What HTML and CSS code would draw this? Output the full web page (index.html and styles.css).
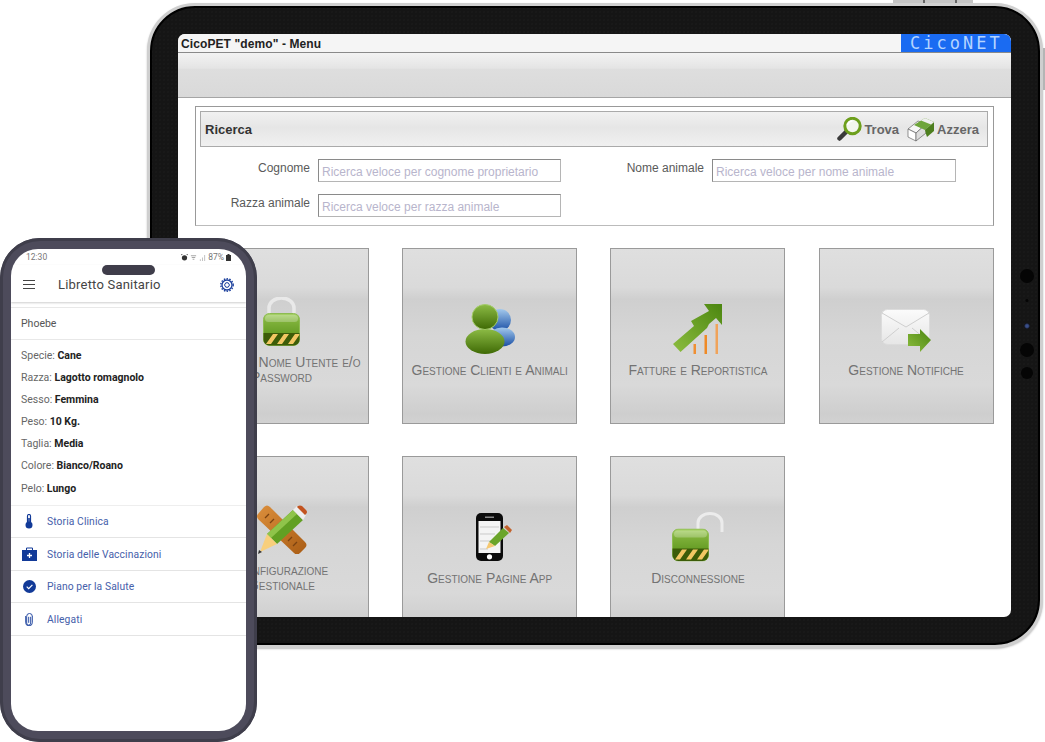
FILE: index.html
```html
<!DOCTYPE html>
<html lang="en">
<head>
    <meta charset="UTF-8">
    <meta name="viewport" content="width=device-width, initial-scale=1.0">
    <title>CicoPET</title>
    <link rel="stylesheet" href="styles.css">
</head>
<body>

<!-- shared gradients and the lock body -->
<svg class="defs" width="0" height="0">
    <defs>
        <linearGradient id="gLock" x1="0" y1="0" x2="0" y2="1">
            <stop offset="0" stop-color="#a9d36a"/>
            <stop offset=".25" stop-color="#7fb13a"/>
            <stop offset="1" stop-color="#4f8a12"/>
        </linearGradient>
        <linearGradient id="gPerson" x1="0" y1="0" x2="0" y2="1">
            <stop offset="0" stop-color="#8cbb45"/>
            <stop offset="1" stop-color="#3f6a05"/>
        </linearGradient>
        <linearGradient id="gBlue" x1="0" y1="0" x2="0" y2="1">
            <stop offset="0" stop-color="#a3c9ec"/>
            <stop offset="1" stop-color="#1a4fa5"/>
        </linearGradient>
        <linearGradient id="gArrow" x1="0" y1="1" x2="1" y2="0">
            <stop offset="0" stop-color="#8cbd3f"/>
            <stop offset="1" stop-color="#4c8610"/>
        </linearGradient>
        <linearGradient id="gWood" x1="0" y1="0" x2="1" y2="1">
            <stop offset="0" stop-color="#dc8f3c"/>
            <stop offset="1" stop-color="#a95c14"/>
        </linearGradient>
        <linearGradient id="gEnv" x1="0" y1="0" x2="0" y2="1">
            <stop offset="0" stop-color="#fbfbfb"/>
            <stop offset="1" stop-color="#e6e6e6"/>
        </linearGradient>
        <clipPath id="lockClip"><rect x="0.5" y="0.5" width="36" height="32" rx="6"/></clipPath>
        <symbol id="lockBody" viewBox="0 0 37 33">
            <rect x="0.5" y="0.5" width="36" height="32" rx="6" fill="url(#gLock)" stroke="#8dbb52"/>
            <g clip-path="url(#lockClip)">
                <rect y="20" width="37" height="13" fill="#3c5c08"/>
                <path d="M3 31l7-10h5l-7 10zM14 31l7-10h5l-7 10zM25 31l7-10h5l-7 10z" fill="#f2c763"/>
            </g>
            <rect x="2" y="2" width="33" height="7" rx="3.5" fill="#fff" opacity=".25"/>
        </symbol>
    </defs>
</svg>

<div class="tablet">
    <span class="tablet-top-btn"></span>
    <span class="tablet-side-btn"></span>
    <div class="sensors">
        <span class="sensor s-big"></span>
        <span class="sensor s-tiny"></span>
        <span class="sensor s-cam"></span>
        <span class="sensor s-big"></span>
        <span class="sensor s-mid"></span>
    </div>

    <div class="screen">
        <div class="titlebar">
            <span class="title">CicoPET "demo" - Menu</span>
            <span class="logo">CicoNET</span>
        </div>
        <div class="toolbar"></div>

        <div class="content">
            <div class="search">
                <div class="search-head">
                    <span class="search-title">Ricerca</span>
                    <div class="search-actions">
                        <a class="action">
                            <svg width="25" height="25" viewBox="0 0 25 25">
                                <path d="M9 15L2.500 21.500" stroke="#3a3a3a" stroke-width="4.500" stroke-linecap="round"/>
                                <circle cx="15.500" cy="9" r="7.700" fill="#f3f6ec" stroke="#6d9f1c" stroke-width="3"/>
                                <path d="M10.500 8a5.500 5.500 0 0 1 5-4" stroke="#fff" stroke-width="1.500" fill="none"/>
                            </svg>
                            Trova
                        </a>
                        <a class="action">
                            <svg width="28" height="25" viewBox="0 0 28 25">
                                <path d="M1 12L11 4l8 3-10 9z" fill="#f6f6f6" stroke="#666" stroke-width=".7"/>
                                <path d="M1 12l8 4v8l-8-4z" fill="#fff" stroke="#666" stroke-width=".7"/>
                                <path d="M9 16L19 7v9L9 24z" fill="#ddd" stroke="#666" stroke-width=".7"/>
                                <path d="M7 8l11-7 9 4-9 8z" fill="#6ea53a"/>
                                <path d="M18 13l9-8v9l-7 6-1-3z" fill="#4d7f1e"/>
                                <path d="M14 3.500l4-2.500 9 4-3 2.500z" fill="#eee"/>
                            </svg>
                            Azzera
                        </a>
                    </div>
                </div>
                <form class="search-form">
                    <label class="field-label" for="cognome">Cognome</label>
                    <input class="field" id="cognome" type="text" placeholder="Ricerca veloce per cognome proprietario">
                    <label class="field-label" for="nome">Nome animale</label>
                    <input class="field" id="nome" type="text" placeholder="Ricerca veloce per nome animale">
                    <label class="field-label" for="razza">Razza animale</label>
                    <input class="field" id="razza" type="text" placeholder="Ricerca veloce per razza animale">
                </form>
            </div>

            <div class="tiles">
                <a class="tile">
                    <svg width="37" height="49" viewBox="0 0 37 49">
                        <path d="M6 18V11a12.500 10 0 0 1 25 0v7" fill="none" stroke="#e9e9e9" stroke-width="3.500"/>
                        <use href="#lockBody" y="16" width="37" height="33"/>
                    </svg>
                    <span class="tile-label">Modifica Nome Utente e/o<br>Password</span>
                </a>
                <a class="tile">
                    <svg width="50" height="50" viewBox="0 0 50 50">
                        <circle cx="35" cy="16" r="11" fill="url(#gBlue)"/>
                        <ellipse cx="37" cy="33" rx="13" ry="9.500" fill="url(#gBlue)"/>
                        <ellipse cx="20" cy="37.500" rx="19.500" ry="12.500" fill="url(#gPerson)"/>
                        <ellipse cx="20" cy="13" rx="13" ry="12.500" fill="url(#gPerson)" stroke="#a4cc6a"/>
                    </svg>
                    <span class="tile-label">Gestione Clienti e Animali</span>
                </a>
                <a class="tile">
                    <svg width="50" height="50" viewBox="0 0 50 50">
                        <rect x="20.500" y="40" width="2.500" height="10" fill="#ef8f33"/>
                        <rect x="31.500" y="31" width="2.500" height="19" fill="#ef8a26"/>
                        <rect x="42.500" y="20" width="2.500" height="30" fill="#f0a35a"/>
                        <path d="M31 0H49V21L43 14 36 20 34 24 7.500 48 0 40 21 22 18 17 36 7z" fill="url(#gArrow)"/>
                    </svg>
                    <span class="tile-label">Fatture e Reportistica</span>
                </a>
                <a class="tile">
                    <svg width="51" height="50" viewBox="0 0 51 50">
                        <rect x="0.500" y="5.500" width="48" height="35" rx="6" fill="url(#gEnv)" stroke="#dcdcdc"/>
                        <path d="M1 9l24 14 23-14M1 38l17-14M48 38L31 24" fill="none" stroke="#cfcfcf"/>
                        <path d="M27 30h12v-5l11 11-11 12v-6H27z" fill="url(#gArrow)"/>
                    </svg>
                    <span class="tile-label">Gestione Notifiche</span>
                </a>
                <a class="tile">
                    <svg width="50" height="49" viewBox="0 0 50 49">
                        <path d="M1 9l6-7q3-3 6 0l35 35q3 3 0 6l-5 5q-3 3-6 0L1 14q-2-3 0-5z" fill="url(#gWood)"/>
                        <path d="M8 13l4-4M13 18l4-4M18 23l4-4M31 36l4-4M36 41l4-4" stroke="#7b4210" stroke-width="1.300"/>
                        <path d="M10 29L36 5l10 10-26 24z" fill="#62a023"/>
                        <path d="M10 29L36 5l4 4-26 24z" fill="#8fc44a"/>
                        <path d="M10 29l10 10-17 8z" fill="#f8cf7c"/>
                        <path d="M1 49l1-4 3 2z" fill="#333"/>
                        <path d="M36 5l4-4 9 9-3 5z" fill="#eee"/>
                        <path d="M41 1q2-1 4 0l4 4q2 2 0 4l-1 1-8-8z" fill="#c2531f"/>
                    </svg>
                    <span class="tile-label">Configurazione<br>Gestionale</span>
                </a>
                <a class="tile">
                    <svg class="icon-shift" width="37" height="50" viewBox="0 -1 37 50">
                        <rect x="0" y="0" width="27" height="48" rx="5" fill="#0b0b0b"/>
                        <rect x="2.500" y="8" width="22" height="32" fill="#f4f4f4"/>
                        <path d="M4 14h19M4 21h15M4 28h12M4 36h8" stroke="#c9c9c9"/>
                        <rect x="9" y="3.500" width="9" height="1.500" fill="#888"/>
                        <circle cx="13.500" cy="43.800" r="2.600" fill="#fff"/>
                        <path d="M13 29l14-14 6 5-14 13z" fill="#6ba52a"/>
                        <path d="M13 29l6 4-9 3z" fill="#f6c871"/>
                        <path d="M28 14l3-2 5 5-2 3z" fill="#c2622c"/>
                    </svg>
                    <span class="tile-label">Gestione Pagine App</span>
                </a>
                <a class="tile">
                    <svg width="52" height="50" viewBox="0 0 52 50">
                        <path d="M26 19V11a12 9.500 0 0 1 24 0v9" fill="none" stroke="#ececec" stroke-width="3"/>
                        <use href="#lockBody" y="16.500" width="37" height="33"/>
                    </svg>
                    <span class="tile-label">Disconnessione</span>
                </a>
            </div>
        </div>
    </div>
</div>

<div class="phone">
    <div class="phone-screen">
        <span class="notch"></span>
        <div class="statusbar">
            <span>12:30</span>
            <span class="status-right">
                <svg width="7" height="7" viewBox="0 0 8 8"><circle cx="4" cy="4.300" r="3" fill="#333"/><path d="M0 1.500L1.500 0M8 1.500L6.500 0" stroke="#333"/></svg>
                <svg width="7" height="7" viewBox="0 0 8 8"><path d="M1 2h6M2 4h4M3 6h2" stroke="#999"/></svg>
                <svg width="7" height="7" viewBox="0 0 8 8"><path d="M1 8V6h1v2zM3.500 8V4h1v4zM6 8V1h1v7z" fill="#bbb"/></svg>
                87%
                <svg width="5" height="7" viewBox="0 0 5 7"><path d="M1.500 0h2v1H5v6H0V1h1.500z" fill="#333"/></svg>
            </span>
        </div>
        <div class="appbar">
            <svg class="menu-icon" width="12" height="9" viewBox="0 0 12 9"><path d="M0 .5h12M0 4.500h12M0 8.500h12" stroke="#444" stroke-width="1"/></svg>
            <span class="appbar-title">Libretto Sanitario</span>
            <svg class="gear-icon" width="14" height="14" viewBox="0 0 14 14">
                <circle cx="7" cy="7" r="5" fill="none" stroke="#1b3f9c" stroke-width="1.300"/>
                <circle cx="7" cy="7" r="6.200" fill="none" stroke="#1b3f9c" stroke-width="1.400" stroke-dasharray="1.500 1.300"/>
                <path d="M4.500 7L5.800 4.800h2.400L9.500 7 8.200 9.200H5.800z" fill="none" stroke="#1b3f9c"/>
            </svg>
        </div>
        <div class="pet-name">Phoebe</div>
        <ul class="facts">
            <li>Specie: <b>Cane</b></li>
            <li>Razza: <b>Lagotto romagnolo</b></li>
            <li>Sesso: <b>Femmina</b></li>
            <li>Peso: <b>10 Kg.</b></li>
            <li>Taglia: <b>Media</b></li>
            <li>Colore: <b>Bianco/Roano</b></li>
            <li>Pelo: <b>Lungo</b></li>
        </ul>
        <ul class="links">
            <li>
                <span class="link-icon"><svg width="8" height="15" viewBox="0 0 8 15"><path d="M2.500 9V2a1.500 1.500 0 0 1 3 0v7" fill="none" stroke="#123a98" stroke-width="1.200"/><circle cx="4" cy="11" r="3.500" fill="#123a98"/><rect x="3.200" y="4" width="1.600" height="6" fill="#123a98"/></svg></span>
                Storia Clinica
            </li>
            <li>
                <span class="link-icon"><svg width="15" height="14" viewBox="0 0 15 14"><path d="M0 3h15v11H0z" fill="#123a98"/><path d="M4.500 3V1h6v2" fill="none" stroke="#123a98"/><path d="M7.500 6v5M5 8.500h5" stroke="#fff" stroke-width="1.300"/></svg></span>
                Storia delle Vaccinazioni
            </li>
            <li>
                <span class="link-icon"><svg width="13" height="13" viewBox="0 0 13 13"><circle cx="6.500" cy="6.500" r="6.500" fill="#123a98"/><path d="M3.700 6.700l2 2 3.700-3.900" fill="none" stroke="#fff" stroke-width="1.200"/></svg></span>
                Piano per la Salute
            </li>
            <li>
                <span class="link-icon"><svg width="8" height="13" viewBox="0 0 8 13"><path d="M6 3.500v6.300a2 2 0 0 1-4 0V3a2.800 2.800 0 0 1 5.600 0M4 3.500V9.500" transform="translate(-.3 .3)" fill="none" stroke="#2b4ea3" stroke-width="1"/><path d="M.7 3v6.800a3.300 3 0 0 0 6.600 0V3" fill="none" stroke="#2b4ea3" stroke-width="1"/></svg></span>
                Allegati
            </li>
        </ul>
    </div>
</div>

</body>
</html>
```

FILE: styles.css
```css
html, body {
    margin: 0;
    padding: 0;
    height: 100%;
    background: #fff;
    overflow: hidden;
    font-family: "Liberation Sans", Arial, sans-serif;
}

.defs {
    position: absolute;
}

/* tablet */
.tablet {
    position: absolute;
    left: 147px;
    top: 3px;
    width: 896px;
    box-sizing: border-box;
    padding: 28px 29px 28px 28px;
    border: 3px solid #cfcfcf;
    border-radius: 48px;
    background-color: #151515;
    background-image: radial-gradient(#222 0.5px, transparent 0.8px);
    background-size: 4px 4px;
    box-shadow: inset 0 0 0 2px #000, 0 1px 2px rgba(0, 0, 0, 0.25);
}

.tablet-top-btn {
    position: absolute;
    left: 743px;
    top: -6px;
    width: 80px;
    height: 3px;
    background: repeating-linear-gradient(90deg, #c4c4c4 0, #c4c4c4 30px, #666 30px, #666 32px);
}

.tablet-side-btn {
    position: absolute;
    right: -5px;
    top: 42px;
    width: 2px;
    height: 42px;
    background: #b5b5b5;
}

.sensors {
    position: absolute;
    right: -3px;
    top: 263px;
    width: 32px;
    height: 122px;
}

.sensor {
    position: absolute;
    left: 50%;
    transform: translateX(-50%);
    border-radius: 50%;
    background: #050505;
}

.s-big {
    width: 14px;
    height: 14px;
}

.sensors .sensor:nth-child(1) { top: 0; }
.sensors .sensor:nth-child(4) { top: 74px; }

.s-tiny {
    top: 30px;
    width: 3px;
    height: 3px;
}

.s-cam {
    top: 54px;
    width: 6px;
    height: 6px;
    background: radial-gradient(#3a4f8a 30%, #10131d 70%);
}

.s-mid {
    top: 98px;
    width: 12px;
    height: 12px;
}

.screen {
    height: 583px;
    overflow: hidden;
    border-radius: 7px;
    background: #fff;
}

.titlebar {
    display: flex;
    justify-content: space-between;
    height: 18px;
    background: #f5f5f5;
    border-bottom: 1px solid #8a8a8a;
}

.title {
    padding: 3px 0 0 3px;
    font-size: 12px;
    line-height: 15px;
    font-weight: bold;
    letter-spacing: 0.1px;
    color: #222;
}

.logo {
    width: 110px;
    box-sizing: border-box;
    padding-left: 9px;
    background: #1a6bf2;
    font-family: "DejaVu Sans Mono", monospace;
    font-size: 17px;
    line-height: 18px;
    letter-spacing: 3px;
    color: #b4d4ff;
}

.toolbar {
    height: 44px;
    background: linear-gradient(#f3f3f3 0, #e4e4e4 35%, #dedede 36%, #d9d9d9 100%);
    border-bottom: 1px solid #a5a5a5;
}

.content {
    padding: 8px 17px 0 16px;
}

/* search panel */
.search {
    margin-left: 1px;
    padding: 4px 5px 8px 4px;
    border: 1px solid #999;
    border-bottom-color: #bbb;
    height: 106px;
}

.search-head {
    display: flex;
    justify-content: space-between;
    align-items: center;
    height: 34px;
    padding: 0 8px 0 4px;
    border: 1px solid #aaa;
    background: linear-gradient(#f1f1f1 0, #e6e6e6 45%, #f0f0f0 100%);
}

.search-title {
    font-size: 13px;
    font-weight: bold;
    color: #333;
}

.search-actions {
    display: flex;
    gap: 8px;
}

.action {
    display: flex;
    align-items: center;
    gap: 3px;
    font-size: 13px;
    font-weight: bold;
    color: #666;
}

.action svg {
    margin-right: -1px;
}

.search-form {
    display: grid;
    grid-template-columns: 110px 243px 135px 244px;
    column-gap: 8px;
    row-gap: 12px;
    margin-top: 12px;
}

.field-label {
    text-align: right;
    font-size: 12px;
    line-height: 18px;
    color: #5a5a5a;
}

.field {
    box-sizing: border-box;
    width: 100%;
    height: 23px;
    padding: 2px 3px 0;
    border: 1px solid #b5b5b5;
    border-top-color: #8a8a8a;
    border-left-color: #8a8a8a;
    font-family: inherit;
    font-size: 12px;
    background: #fff;
}

.field::placeholder {
    color: #b8b5cc;
    opacity: 1;
}

/* menu tiles */
.tiles {
    display: grid;
    grid-template-columns: repeat(4, 175px);
    column-gap: 33.2px;
    row-gap: 32px;
    margin-top: 22px;
}

.tile {
    display: flex;
    flex-direction: column;
    align-items: center;
    justify-content: center;
    gap: 9px;
    box-sizing: border-box;
    height: 176px;
    padding: 10px 4px 0;
    border: 1px solid #9a9a9a;
    background: linear-gradient(#dfdfdf 0, #dadada 22%, #cfcfcf 29%, #d6d6d6 50%, #d9d9d9 78%, #cecece 95%, #d2d2d2 100%);
}

.tile svg {
    flex: none;
    display: block;
}

.tile .icon-shift {
    margin-left: 9px;
}

.tile-label {
    font-size: 14px;
    line-height: 15px;
    font-variant: small-caps;
    text-align: center;
    color: #737373;
    white-space: nowrap;
}

/* phone */
.phone {
    position: absolute;
    left: 0;
    top: 238px;
    width: 257px;
    height: 504px;
    box-sizing: border-box;
    padding: 11px;
    border-radius: 40px;
    background: #4d4b5b;
    box-shadow: inset 0 0 0 3px #3f3e4b;
}

.phone-screen {
    position: relative;
    height: 482px;
    overflow: hidden;
    border-radius: 27px;
    background: #fff;
    font-family: Roboto, "Liberation Sans", sans-serif;
}

.notch {
    position: absolute;
    left: 91px;
    top: 16px;
    width: 53px;
    height: 10px;
    border-radius: 5px;
    background: #3f3d4a;
}

.statusbar {
    display: flex;
    justify-content: space-between;
    align-items: center;
    height: 16px;
    padding: 0 15px;
    font-size: 8.500px;
    color: #777;
}

.status-right {
    display: flex;
    align-items: center;
    gap: 2px;
}

.appbar {
    display: flex;
    align-items: center;
    height: 37px;
    padding: 2px 12px 0;
    box-sizing: border-box;
    box-shadow: 0 1px 2px rgba(0, 0, 0, 0.2);
}

.appbar-title {
    margin-left: 23px;
    flex: 1;
    font-size: 13px;
    letter-spacing: 0.2px;
    color: #444;
}

.pet-name {
    margin-top: 5px;
    padding: 0 10px;
    height: 31px;
    line-height: 32px;
    font-size: 10.500px;
    color: #555;
    border-top: 1px solid #e8e8e8;
    border-bottom: 1px solid #e8e8e8;
}

.facts {
    list-style: none;
    margin: 0;
    padding: 5px 10px;
    font-size: 10.500px;
    color: #666;
}

.facts li {
    height: 22.100px;
    line-height: 22.100px;
}

.facts b {
    font-weight: 700;
    color: #222;
}

.links {
    list-style: none;
    margin: 0;
    padding: 0;
    border-top: 1px solid #eee;
}

.links li {
    display: flex;
    align-items: center;
    box-sizing: border-box;
    height: 32.600px;
    border-bottom: 1px solid #e4e4e4;
    font-size: 10.300px;
    letter-spacing: 0.1px;
    color: #4560aa;
}

.link-icon {
    display: flex;
    justify-content: center;
    width: 36px;
}
```
